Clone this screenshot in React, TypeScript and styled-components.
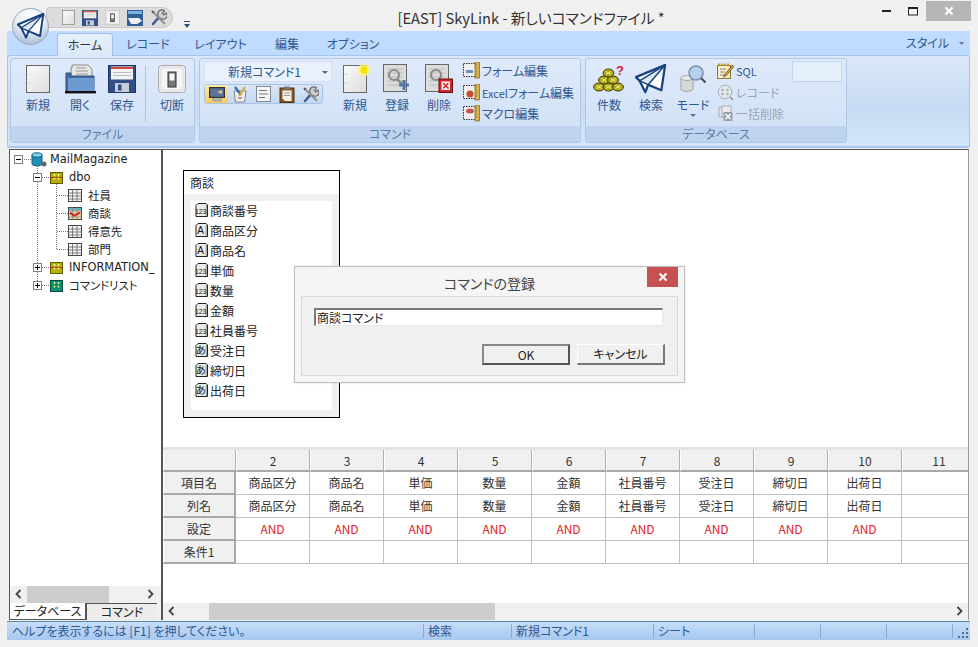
import React from 'react';
import styled, { createGlobalStyle } from 'styled-components';

const FONT = `"Noto Sans CJK JP", "Liberation Sans", sans-serif`;

const Global = createGlobalStyle`
  html, body { margin: 0; padding: 0; background: #f0f0f0; }
  * { box-sizing: border-box; }
  body { font-family: ${FONT}; font-size: 12px; font-feature-settings: "palt" 1; }
`;

const Page = styled.div`
  width: 978px; height: 647px; overflow: hidden; position: relative;
  display: flex; flex-direction: column; background: #f0f0f0; color: #222;
`;
const TitleBar = styled.div`height: 31px; flex: none; position: relative; display: flex; align-items: flex-start;`;
const LogoOrb = styled.div`
  position: absolute; left: 12px; top: 8px; width: 37px; height: 37px; border-radius: 50%; z-index: 3;
  background: radial-gradient(circle at 50% 25%, #ffffff 0%, #e8eef6 45%, #b7c9de 75%, #8ea8c4 100%);
  border: 1px solid #9aa7b5; display: flex; align-items: center; justify-content: center;
`;
const QuickBar = styled.div`
  position: absolute; left: 46px; top: 7px; width: 127px; height: 21px; border-radius: 4px 11px 11px 4px;
  background: #dcdcdc; border: 1px solid #c8c8c8; display: flex; align-items: center; gap: 7px; padding-left: 15px;
`;
const QuickMore = styled.div`position: absolute; left: 184px; top: 14px; width: 6px; height: 7px; color: #34507a;`;
const WindowTitle = styled.div`
  position: absolute; left: 84px; right: 0; top: 8px; text-align: center; font-size: 14.7px; line-height: 20px; color: #333;
`;
const WinButtons = styled.div`position: absolute; right: 7px; top: 1px; display: flex; align-items: flex-start;`;
const WinBtn = styled.div<{ $close?: boolean; $w: number }>`
  width: ${p => p.$w}px; height: 20px; display: flex; align-items: center; justify-content: center;
  background: ${p => (p.$close ? '#b6b6b6' : 'transparent')};
`;

const Ribbon = styled.div`margin: 0 8px 0 7px; background: #bfdbff; flex: none; height: 117px; display: flex; flex-direction: column;`;
const TabStrip = styled.div`height: 24px; flex: none; display: flex; align-items: flex-end; padding-left: 50px; position: relative;`;
const Tab = styled.div<{ $active?: boolean; $w: number }>`
  width: ${p => p.$w}px; height: 22px; text-align: center; line-height: 21px; color: #2f5790; font-size: 12px;
  ${p => p.$active ? `background: linear-gradient(#e6f0fc, #dbe8f9); border: 1px solid #9fc0e8; border-bottom: 0; border-radius: 3px 3px 0 0; margin-bottom: -1px; height: 23px; z-index: 1; position: relative; color: #333;` : ''}
`;
const StyleMenu = styled.div`position: absolute; right: 6px; top: 3px; color: #2f5790; font-size: 12px; display: flex; align-items: center; gap: 10px; line-height: 18px;`;
const RibbonBody = styled.div`
  flex: 1; display: flex; gap: 4px; padding: 2px 3px 3px 2px; border: 1px solid #a5c6ec; border-bottom: 2px solid #a5c6ec;
  background: linear-gradient(#dbe8f9, #c7dbf4 60%, #d4e6fa); border-radius: 3px;
`;
const Group = styled.div<{ $w: number }>`
  width: ${p => p.$w}px; height: 85px; border: 1px solid #afc8e6; border-radius: 3px; display: flex; flex-direction: column;
  background: linear-gradient(#dfeafa, #cfe0f6);
`;
const GroupBody = styled.div<{ $pad: number }>`flex: 1; display: flex; align-items: flex-start; padding-left: ${p => p.$pad}px; min-height: 0;`;
const GroupLabel = styled.div`
  height: 16px; flex: none; background: #bfd5ef; text-align: center; color: #5c7ca6; font-size: 12px; line-height: 15px;
`;
const BigBtn = styled.div`width: 42px; display: flex; flex-direction: column; align-items: center; padding-top: 6px; color: #2f5790; font-size: 12px; position: relative;`;
const BigIcon = styled.div`height: 28px; display: flex; align-items: center; justify-content: center;`;
const BigText = styled.div`line-height: 16px; margin-top: 4px; white-space: nowrap;`;
const Caret = styled.div`position: absolute; top: 55px; left: 18px; width: 0; height: 0; border: 3px solid transparent; border-top-color: #5a6f8c;`;
const RibbonSep = styled.div`width: 1px; height: 56px; background: #a9c3e2; margin: 7px 5px 0 2px;`;
const ComboCol = styled.div`width: 130px; padding-top: 2px; display: flex; flex-direction: column; gap: 2px;`;
const Combo = styled.div`
  width: 128px; height: 21px; background: #e8f1fc; border: 1px solid #cfe0f4; display: flex; align-items: center;
  color: #2f5790; font-size: 12px; padding-left: 23px; position: relative;
`;
const ComboArrow = styled.div`position: absolute; right: 3px; top: 9px; width: 0; height: 0; border: 3px solid transparent; border-top-color: #55677f;`;
const MiniBar = styled.div`
  width: 119px; height: 20px; display: flex; border: 1px solid #a9c3e2; border-radius: 3px; background: linear-gradient(#d9e6f7, #c4d8f1);
`;
const MiniBtn = styled.div<{ $on?: boolean }>`
  flex: 1; display: flex; align-items: center; justify-content: center;
  ${p => (p.$on ? 'background: linear-gradient(#fde9a8, #fbcb62);' : '')}
`;
const Stack = styled.div<{ $ml: number; $w?: number }>`
  margin-left: ${p => p.$ml}px; padding-top: 2px; display: flex; flex-direction: column; gap: 2.5px;
  ${p => (p.$w ? `width: ${p.$w}px;` : '')}
`;
const StackRow = styled.div<{ $off?: boolean }>`
  height: 19px; display: flex; align-items: center; gap: 2px; white-space: nowrap; font-size: 12px;
  color: ${p => (p.$off ? '#9aa6b5' : '#2f5790')};
`;
const SmallLatin = styled.span`font-size: 11px;`;
const GhostField = styled.div`width: 50px; height: 21px; background: #e6f0fc; border: 1px solid #c3d6ee; margin: 2px 0 0 0;`;
const BleedSvg = styled.svg`overflow: visible;`;

const Main = styled.div`
  flex: none; height: 471px; margin: 1px 9px 0 9px; display: flex;
`;
const LeftPane = styled.div`
  width: 154px; display: flex; flex-direction: column; border-left: 1px solid #555; border-right: 2px solid #555; border-top: 1px solid #555; background: #fff;
`;
const Tree = styled.div`flex: 1; position: relative; padding-top: 0; min-height: 0; overflow: hidden;`;
const TreeLines = styled.svg`position: absolute; left: 0; top: 0; pointer-events: none;`;
const TreeRow = styled.div<{ $x: number }>`
  height: 18px; display: flex; align-items: center; padding-left: ${p => p.$x}px; position: relative; white-space: nowrap; color: #222; font-size: 12px;
`;
const Expander = styled.div`
  width: 9px; height: 9px; border: 1px solid #808080; background: #fff; position: relative; margin-right: 8px; flex: none;
  &::before { content: ''; position: absolute; left: 1px; right: 1px; top: 3px; height: 1px; background: #000; }
`;
const ExpanderPlus = styled(Expander)`
  &::after { content: ''; position: absolute; top: 1px; bottom: 1px; left: 3px; width: 1px; background: #000; }
`;
const TreeLabel = styled.span<{ $ml: number }>`margin-left: ${p => p.$ml}px; font-family: "DejaVu Sans", ${FONT}; font-size: 11.4px;`;

const ScrollBar = styled.div`
  height: 17px; flex: none; background: #f0f0f0; display: flex; align-items: center; position: relative;
`;
const Thumb = styled.div<{ $left: number; $w: number }>`
  position: absolute; top: 0; bottom: 0; left: ${p => p.$left}px; width: ${p => p.$w}px; background: #cdcdcd;
`;
const ArrowBox = styled.div<{ $left?: number; $right?: number }>`
  position: absolute; top: 3px; ${p => (p.$left !== undefined ? `left: ${p.$left}px;` : `right: ${p.$right}px;`)} color: #444; line-height: 0;
`;
const PaneTabs = styled.div`height: 17px; flex: none; display: flex; background: #f0f0f0; padding-right: 3px;`;
const PaneTab = styled.div<{ $on?: boolean; $w: number }>`
  width: ${p => p.$w}px; text-align: center; line-height: 16px; font-size: 12px; color: #222;
  ${p => p.$on ? 'background: #ececec; border-top: 1px solid #555; border-left: 2px solid #555;' : 'background: #fff; border-bottom: 1px solid #555;'}
`;

const RightPane = styled.div`flex: 1; min-width: 0; display: flex; flex-direction: column; border-top: 1px solid #555; border-right: 1px solid #999; position: relative; background: #fff;`;
const Canvas = styled.div`height: 300px; flex: none; padding: 20px 0 0 20px; background: #fff; border-bottom: 3px solid #e4e4e4;`;
const TableCard = styled.div`width: 157px; height: 248px; border: 1px solid #000; background: #f0f0f0; display: flex; flex-direction: column;`;
const CardTitle = styled.div`height: 23px; flex: none; background: #fff; padding: 3px 0 0 6px; line-height: 17px; font-size: 12px; color: #222;`;
const CardList = styled.div`flex: 1; margin: 7px; background: #fff;`;
const FieldRow = styled.div`height: 20px; display: flex; align-items: center; padding: 0 0 2px 4px; gap: 2px; font-size: 12px; color: #222;`;

const GridArea = styled.div`flex: 1; min-height: 0; overflow: hidden; background: #fff;`;
const SheetGrid = styled.div`
  display: grid; grid-template-columns: 73px repeat(10, 74px); grid-template-rows: 22px repeat(4, 23px); width: 840px;
`;
const HeadCell = styled.div`
  background: #f0f0f0; border-right: 1px solid #b0b0b0; border-bottom: 2px solid #a8a8a8; border-left: 1px solid #fff;
  display: flex; align-items: center; justify-content: center; font-size: 12px; color: #333;
`;
const RowHead = styled(HeadCell)`border-right: 2px solid #a8a8a8; border-bottom: 2px solid #a8a8a8; font-size: 12px;`;
const DataCell = styled.div<{ $red?: boolean }>`
  border-right: 1px solid #c0c0c0; border-bottom: 1px solid #c0c0c0; display: flex; align-items: center; justify-content: center; padding-bottom: 1px;
  font-size: 12px; color: ${p => (p.$red ? '#e0202c' : '#333')}; background: #fff; white-space: nowrap;
`;

const Dialog = styled.div`
  position: absolute; left: 131px; top: 116px; width: 391px; height: 117px; background: #f5f5f5; border: 1px solid #bdbdbd;
  box-shadow: 0 0 2px rgba(0,0,0,.12); padding: 0 6px 6px 6px; display: flex; flex-direction: column; z-index: 5;
`;
const DialogTitle = styled.div`height: 29px; flex: none; text-align: center; font-size: 14px; line-height: 33px; color: #444;`;
const DialogClose = styled.div`
  position: absolute; right: 6px; top: 0; width: 31px; height: 20px; background: #c75050; display: flex; align-items: center; justify-content: center;
`;
const DialogBody = styled.div`flex: 1; background: #f0f0f0; border: 1px solid #d9d9d9; padding: 11px 12px 0 12px;`;
const NameInput = styled.div`
  width: 349px; height: 18px; background: #fff; border-top: 2px solid #7a7a7a; border-left: 2px solid #7a7a7a;
  border-right: 1px solid #e8e8e8; border-bottom: 1px solid #e8e8e8; font-size: 12px; line-height: 15px; color: #222; padding-left: 1px;
`;
const DialogActions = styled.div`display: flex; justify-content: flex-end; gap: 7px; margin-top: 18px;`;
const DlgBtn = styled.div<{ $def?: boolean }>`
  width: 88px; height: 21px; background: #f0f0f0; text-align: center; font-size: 12px; line-height: 18px; color: #222;
  border: 1px solid; border-color: #fff #777 #777 #fff;
  ${p => (p.$def ? 'border: 2px solid #666; border-color: #888 #555 #555 #888; line-height: 17px;' : 'border-bottom-width: 2px; border-right-width: 2px;')}
`;

const StatusBar = styled.div`
  flex: none; height: 19px; margin: 1px 8px 0 7px; border-top: 1px solid #5c8898; position: relative;
  background: linear-gradient(#c8def9, #b5d1f4 55%, #a8c8f0); display: flex; align-items: stretch; color: #2f5790; font-size: 12px;
`;
const StatusCell = styled.div<{ $w: number }>`
  width: ${p => p.$w}px; flex: none; padding-left: 5px; line-height: 17px; white-space: nowrap;
  position: relative;
  &:not(:first-child)::before { content: ''; position: absolute; left: 0; top: 2px; bottom: 2px; width: 1px; background: #8ea9c9; }
`;
const Grip = styled.svg`position: absolute; right: 1px; bottom: 1px;`;

/* ---------- icons ---------- */
const Plane = ({ s = 34 }: { s?: number }) => (
  <svg width={s} height={s * 0.94} viewBox="0 0 34 32">
    <path d="M1 14 L32 1 L28 28 L14 22 L11 30 L5 18 Z" fill="#fff" stroke="#16427f" strokeWidth="2.4" strokeLinejoin="round" />
    <path d="M5 18 L32 1 L14 22 Z" fill="#dfe7f2" stroke="#16427f" strokeWidth="1.6" strokeLinejoin="round" />
  </svg>
);
const Page16 = ({ w = 24, h = 28, dot = false }: { w?: number; h?: number; dot?: boolean }) => (
  <BleedSvg width={w} height={h} viewBox="0 0 24 28">
    <defs>
      <linearGradient id="pg" x1="0" y1="0" x2="1" y2="1"><stop offset="0" stopColor="#fbfbfb" /><stop offset="1" stopColor="#dcdcdc" /></linearGradient>
    </defs>
    <rect x=".5" y=".5" width="23" height="27" fill="url(#pg)" stroke="#666" />
    <circle cx="3" cy="9" r=".6" fill="#999" /><circle cx="3" cy="18" r=".6" fill="#999" />
    {dot && <g><circle cx="21" cy="5" r="6.5" fill="#fff27a" opacity=".75" /><circle cx="21" cy="5" r="3.5" fill="#f3e400" /></g>}
  </BleedSvg>
);
const Folder = () => (
  <svg width="31" height="30" viewBox="0 0 31 30">
    <path d="M6 4 H7 V1 H23 L27 5 V14 H6Z" fill="#e6e6e6" stroke="#777" strokeWidth=".8" />
    <path d="M11 4 H21 M11 7 H23 M11 10 H23" stroke="#999" />
    <path d="M1 9 H6 V12 H29 V27 H1 Z" fill="#3f6da8" stroke="#334e75" />
    <path d="M3 14 H29 V27 H3Z" fill="#6c9bd1" />
    <rect x="0" y="27" width="31" height="2.4" fill="#111" />
  </svg>
);
const Floppy = ({ s = 28 }: { s?: number }) => (
  <svg width={s} height={s} viewBox="0 0 28 28">
    <rect x=".5" y=".5" width="27" height="27" fill="#2f4f86" stroke="#1f3563" />
    <rect x="3" y="1.5" width="22" height="13" fill="#f4f4f4" />
    <rect x="3" y="2" width="22" height="2" fill="#d44a3a" />
    <path d="M5 7.5H23M5 10.5H23" stroke="#bbb" />
    <rect x="7" y="18" width="14" height="9" fill="#c8ccd4" />
    <rect x="10" y="19.5" width="3.5" height="6" fill="#2f4f86" />
  </svg>
);
const Switch = ({ s = 28 }: { s?: number }) => (
  <svg width={s} height={s} viewBox="0 0 28 28">
    <rect x=".5" y=".5" width="27" height="27" rx="3" fill="#ededed" stroke="#a8a8a8" />
    <rect x="3" y="3" width="22" height="22" rx="2" fill="#f5f5f5" stroke="#ddd" />
    <rect x="10" y="7" width="8" height="15" fill="#777" stroke="#333" />
    <rect x="11.5" y="8.5" width="5" height="7" fill="#f4f4f4" />
  </svg>
);
const Tools = ({ s = 17 }: { s?: number }) => (
  <svg width={s} height={s} viewBox="0 0 17 17" fill="none">
    <path d="M3 15 L10 7" stroke="#3b5f93" strokeWidth="2.6" strokeLinecap="round" />
    <path d="M9 8 A3.4 3.4 0 0 1 14.5 2 L12.4 4.4 L14 6 L16 4 A3.4 3.4 0 0 1 10.5 9" stroke="#666" strokeWidth="1.2" fill="#cfcfcf" />
    <path d="M2 2 L15 15" stroke="#8f8f8f" strokeWidth="2" />
    <path d="M1.5 1.5 L4.5 2.5 L2.5 4.5 Z" fill="#555" />
  </svg>
);
const Monitor = () => (
  <svg width="16" height="15" viewBox="0 0 16 15">
    <rect x=".5" y=".5" width="15" height="10" fill="#4f5f74" stroke="#333" />
    <rect x="2" y="2" width="12" height="7" fill="#5b6fa0" /><path d="M8 5 L13 3 V7 Z" fill="#e8c860" />
    <rect x="4" y="11" width="8" height="3" fill="#b9b9b9" stroke="#777" strokeWidth=".5" />
  </svg>
);
const Pencils = () => (
  <svg width="16" height="17" viewBox="0 0 16 17">
    <path d="M2 5 H14 L12.5 16 H3.5Z" fill="#eee" stroke="#888" />
    <path d="M3 1 L9 9" stroke="#3e6ca8" strokeWidth="2.4" /><path d="M13 1 L7 10" stroke="#d7a93a" strokeWidth="2" />
    <path d="M6 12H10" stroke="#a33" />
  </svg>
);
const Note = () => (
  <svg width="15" height="16" viewBox="0 0 15 16">
    <rect x=".5" y=".5" width="14" height="15" fill="#f5f5f5" stroke="#7f8a99" />
    <path d="M3 4.5H11M3 8H12M3 11.5H9" stroke="#777" />
  </svg>
);
const Clip = () => (
  <svg width="16" height="17" viewBox="0 0 16 17">
    <rect x="1" y="2" width="14" height="14.5" fill="#8a5a22" stroke="#4e3210" />
    <path d="M3.5 4.5H12.5V15H6L3.5 12.5Z" fill="#f3f3ee" />
    <rect x="5" y="0.5" width="6" height="3" fill="#777" />
    <path d="M5 7H11M5 9.5H11" stroke="#999" />
  </svg>
);
const Reg = ({ kind }: { kind: 'add' | 'del' }) => (
  <svg width="28" height="30" viewBox="0 0 28 30">
    <rect x=".5" y=".5" width="23" height="27" fill="#dcdcdc" stroke="#666" />
    <path d="M4 5H20M4 9H20M4 13H20M4 17H20M4 21H20" stroke="#bcbcbc" />
    <circle cx="11" cy="11" r="5" fill="none" stroke="#8d8d8d" strokeWidth="2.2" /><path d="M14 15 L20 21" stroke="#8d8d8d" strokeWidth="2.6" />
    {kind === 'add'
      ? <path d="M21 16V26M16 21H26" stroke="#4f77a8" strokeWidth="3" />
      : <g><rect x="14" y="15" width="13.5" height="13.5" fill="#d8202c" stroke="#611" /><rect x="16.5" y="17.5" width="8.5" height="8.5" fill="#fff" /><path d="M18 19L23.5 24.5M23.5 19L18 24.5" stroke="#d8202c" strokeWidth="1.6" /></g>}
  </svg>
);
const FormIcon = ({ v }: { v: number }) => (
  <svg width="17" height="17" viewBox="0 0 17 17">
    <rect x=".5" y="1.5" width="13" height="13" fill="#efefef" stroke="#333" strokeDasharray="1.5 1" />
    <rect x="12" y="0" width="4.5" height="16" fill="#d8b24a" stroke="#7d6420" strokeWidth=".7" />
    <path d="M12 3H14M12 6H14M12 9H14M12 12H14" stroke="#7d6420" strokeWidth=".7" />
    {v === 0 && <rect x="3" y="8" width="7" height="3" fill="#6f8fb8" />}
    {v === 1 && <circle cx="7" cy="10" r="3.5" fill="#c6492c" />}
    {v === 2 && <ellipse cx="7" cy="6" rx="4" ry="2.5" fill="#c9544c" />}
  </svg>
);
const Coins = () => (
  <BleedSvg width="30" height="28" viewBox="0 0 30 28">
    {[[5, 22], [14.5, 22], [24, 22], [10, 15], [19, 15], [14.5, 8]].map(([x, y], i) => (
      <g key={i}>
        <ellipse cx={x} cy={y} rx="5.4" ry="4" fill="#b0ab18" stroke="#3d3a05" />
        <path d={`M${x - 2.5} ${y - 1.5}L${x + 2.5} ${y + 1.5}M${x + 2.5} ${y - 1.5}L${x - 2.5} ${y + 1.5}`} stroke="#efe98c" />
      </g>
    ))}
    <text x="22" y="10" fill="#d0202c" fontSize="13" fontWeight="700" fontFamily="Liberation Sans">?</text>
  </BleedSvg>
);
const ModeIcon = () => (
  <svg width="27" height="30" viewBox="0 0 27 30">
    <path d="M1 14 V25 C1 28 13 28 13 25 V14Z" fill="#d8d8d8" stroke="#a3a3a3" />
    <ellipse cx="7" cy="14" rx="6" ry="2.4" fill="#eee" stroke="#a3a3a3" />
    <circle cx="16" cy="9" r="7" fill="#b6d2f0" stroke="#7a8ea8" strokeWidth="1.5" />
    <path d="M21 14 L25.5 18.5" stroke="#555" strokeWidth="2.4" />
  </svg>
);
const SqlIcon = () => (
  <svg width="17" height="16" viewBox="0 0 17 16">
    <rect x=".5" y="2.5" width="13" height="13" fill="#f5eec6" stroke="#8a7a30" />
    <path d="M1 1.5H13" stroke="#c99a28" strokeWidth="2" strokeDasharray="2 1" />
    <path d="M3 6H9M3 9H8M3 12H7" stroke="#888" />
    <path d="M15.5 2 L8 11 L6.5 14 L9.5 12.5 L16.5 4Z" fill="#d9a43a" stroke="#5a4416" strokeWidth=".7" />
  </svg>
);
const RecIcon = () => (
  <svg width="17" height="17" viewBox="0 0 17 17">
    <circle cx="8" cy="8" r="6.8" fill="#e3e6ea" stroke="#aab0b8" />
    <circle cx="5.5" cy="6" r="1.2" fill="#a8aeb6" /><circle cx="10.5" cy="6" r="1.2" fill="#a8aeb6" />
    <circle cx="5.5" cy="10" r="1.2" fill="#a8aeb6" /><circle cx="10.5" cy="10" r="1.2" fill="#a8aeb6" />
    <path d="M13 13L16 16" stroke="#8e949c" strokeWidth="1.6" />
  </svg>
);
const BulkIcon = () => (
  <svg width="17" height="17" viewBox="0 0 17 17">
    <rect x="2" y="2" width="9" height="10" fill="#dfe2e6" stroke="#aab0b8" />
    <rect x="5" y="1" width="9" height="11" fill="#e9ebee" stroke="#aab0b8" />
    <rect x="6.5" y="7" width="9" height="9" fill="#9aa0a8" />
    <path d="M8.5 9L13.5 14M13.5 9L8.5 14" stroke="#fff" strokeWidth="1.4" />
  </svg>
);
const DbCyl = () => (
  <svg width="16" height="15" viewBox="0 0 16 15">
    <path d="M1 3V12C1 14.5 11 14.5 11 12V3Z" fill="#1f8fb8" stroke="#0d5e80" />
    <ellipse cx="6" cy="3" rx="5" ry="2.2" fill="#7fd0ea" stroke="#0d5e80" />
    <circle cx="13" cy="12" r="2.5" fill="#666" />
  </svg>
);
const Schema = ({ teal }: { teal?: boolean }) => (
  <svg width="13" height="13" viewBox="0 0 13 13">
    <rect x=".5" y="1.5" width="12" height="11" fill={teal ? '#0f8f78' : '#b8b000'} stroke={teal ? '#054d40' : '#5f5a00'} />
    <path d="M0 6.5H13" stroke={teal ? '#083' : '#a03020'} />
    <path d="M4.5 3V10M8.5 3V10" stroke="#fff6a0" strokeWidth="1.4" strokeDasharray="2 1.5" />
  </svg>
);
const GridIco = ({ hit }: { hit?: boolean }) => (
  <svg width="14" height="13" viewBox="0 0 14 13">
    <rect x=".5" y=".5" width="13" height="12" fill={hit ? '#f5dc8c' : '#f4f4f4'} stroke="#444" />
    {hit && <rect x="1" y="1" width="12" height="2.5" fill="#5fb7c9" />}
    <path d="M.5 4H13.5M.5 7H13.5M.5 10H13.5M4.5 .5V12.5M9 .5V12.5" stroke={hit ? '#888' : '#666'} strokeWidth=".8" />
    {hit && <path d="M2 5.5 L6 9 L12 5.5" fill="none" stroke="#d0202c" strokeWidth="1.8" />}
  </svg>
);
const Badge = ({ t }: { t: '123' | 'A' | 'あ' }) => (
  <svg width="13" height="14" viewBox="0 0 13 14">
    <path d="M3 .5H11L12.5 2V13.5H1V2.5Z" fill="#ececec" stroke="#222" />
    <rect x="10.5" y="2" width="1.5" height="11" fill="#aaa" />
    <text x="5.7" y="10.6" textAnchor="middle" fontSize={t === '123' ? 6.8 : 10} fontFamily={t === 'あ' ? 'Noto Sans CJK JP' : 'Liberation Sans'} fill="#111">{t}</text>
  </svg>
);
const Chevron = ({ dir }: { dir: 'l' | 'r' }) => (
  <svg width="7" height="10" viewBox="0 0 7 10" fill="none">
    <path d={dir === 'l' ? 'M5.5 1 L1.5 5 L5.5 9' : 'M1.5 1 L5.5 5 L1.5 9'} stroke="#444" strokeWidth="1.8" />
  </svg>
);
const Cross = () => (
  <svg width="10" height="10" viewBox="0 0 10 10"><path d="M1.5 1.5L8.5 8.5M8.5 1.5L1.5 8.5" stroke="#fff" strokeWidth="2" /></svg>
);

const columns = [
  ['2', '商品区分', '商品区分'], ['3', '商品名', '商品名'], ['4', '単価', '単価'], ['5', '数量', '数量'],
  ['6', '金額', '金額'], ['7', '社員番号', '社員番号'], ['8', '受注日', '受注日'], ['9', '締切日', '締切日'], ['10', '出荷日', '出荷日'], ['11', '', ''],
];
const fields: [('123' | 'A' | 'あ'), string][] = [
  ['123', '商談番号'], ['A', '商品区分'], ['A', '商品名'], ['123', '単価'], ['123', '数量'], ['123', '金額'],
  ['123', '社員番号'], ['あ', '受注日'], ['あ', '締切日'], ['あ', '出荷日'],
];

export default function App() {
  return (
    <Page>
      <Global />
      <TitleBar>
        <LogoOrb><Plane s={28} /></LogoOrb>
        <QuickBar>
          <Page16 w={13} h={15} />
          <Floppy s={16} />
          <Switch s={15} />
          <svg width="16" height="16" viewBox="0 0 16 16"><rect width="16" height="16" fill="#2f5f96" /><rect x="1" y="1" width="14" height="3" fill="#7fb0e0" /><path d="M1 8H12L15 11L10 14H4Z" fill="#f0f0f0" /></svg>
          <Tools />
        </QuickBar>
        <QuickMore>
          <svg width="6" height="7" viewBox="0 0 6 7"><path d="M0 0H6V1H0ZM0 3H6L3 7Z" fill="#34507a" /></svg>
        </QuickMore>
        <WindowTitle>[EAST] SkyLink - 新しいコマンドファイル *</WindowTitle>
        <WinButtons>
          <WinBtn $w={27}><svg width="9" height="4"><rect y="1" width="9" height="2" fill="#222" /></svg></WinBtn>
          <WinBtn $w={26}><svg width="10" height="9"><rect x=".5" y=".5" width="9" height="7.5" fill="none" stroke="#222" /><rect width="10" height="2" fill="#222" /></svg></WinBtn>
          <WinBtn $w={45} $close><Cross /></WinBtn>
        </WinButtons>
      </TitleBar>

      <Ribbon>
        <TabStrip>
          <Tab $active $w={56}>ホーム</Tab>
          <Tab $w={70}>レコード</Tab>
          <Tab $w={75}>レイアウト</Tab>
          <Tab $w={58}>編集</Tab>
          <Tab $w={74}>オプション</Tab>
          <StyleMenu>スタイル<svg width="5" height="3"><path d="M0 0H5L2.5 3Z" fill="#778" /></svg></StyleMenu>
        </TabStrip>
        <RibbonBody>
          <Group $w={185}>
            <GroupBody $pad={6}>
              <BigBtn><BigIcon><Page16 /></BigIcon><BigText>新規</BigText></BigBtn>
              <BigBtn><BigIcon><Folder /></BigIcon><BigText>開く</BigText></BigBtn>
              <BigBtn><BigIcon><Floppy /></BigIcon><BigText>保存</BigText></BigBtn>
              <RibbonSep />
              <BigBtn><BigIcon><Switch /></BigIcon><BigText>切断</BigText></BigBtn>
            </GroupBody>
            <GroupLabel>ファイル</GroupLabel>
          </Group>
          <Group $w={382}>
            <GroupBody $pad={4}>
              <ComboCol>
                <Combo>新規コマンド1<ComboArrow /></Combo>
                <MiniBar>
                  <MiniBtn $on><Monitor /></MiniBtn>
                  <MiniBtn><Pencils /></MiniBtn>
                  <MiniBtn><Note /></MiniBtn>
                  <MiniBtn><Clip /></MiniBtn>
                  <MiniBtn><Tools /></MiniBtn>
                </MiniBar>
              </ComboCol>
              <BigBtn><BigIcon><Page16 dot /></BigIcon><BigText>新規</BigText></BigBtn>
              <BigBtn><BigIcon><Reg kind="add" /></BigIcon><BigText>登録</BigText></BigBtn>
              <BigBtn><BigIcon><Reg kind="del" /></BigIcon><BigText>削除</BigText></BigBtn>
              <Stack $ml={3}>
                <StackRow><FormIcon v={0} />フォーム編集</StackRow>
                <StackRow><FormIcon v={1} /><span><SmallLatin>Excel</SmallLatin>フォーム編集</span></StackRow>
                <StackRow><FormIcon v={2} />マクロ編集</StackRow>
              </Stack>
            </GroupBody>
            <GroupLabel>コマンド</GroupLabel>
          </Group>
          <Group $w={262}>
            <GroupBody $pad={2}>
              <BigBtn><BigIcon><Coins /></BigIcon><BigText>件数</BigText></BigBtn>
              <BigBtn><BigIcon><Plane s={32} /></BigIcon><BigText>検索</BigText></BigBtn>
              <BigBtn><BigIcon><ModeIcon /></BigIcon><BigText>モード</BigText><Caret /></BigBtn>
              <Stack $ml={3} $w={75}>
                <StackRow><SqlIcon /><SmallLatin>SQL</SmallLatin></StackRow>
                <StackRow $off><RecIcon />レコード</StackRow>
                <StackRow $off><BulkIcon />一括削除</StackRow>
              </Stack>
              <GhostField />
            </GroupBody>
            <GroupLabel>データベース</GroupLabel>
          </Group>
        </RibbonBody>
      </Ribbon>

      <Main>
        <LeftPane>
          <Tree>
            <TreeLines width="150" height="300">
              <g stroke="#777" strokeDasharray="1 1" fill="none" shapeRendering="crispEdges">
                <path d="M13.5 9H21M27.5 14V135M32 27H40M46.5 32V99M47 45H58M47 63H58M47 81H58M47 99H58M32 117H40M32 135H40" />
              </g>
            </TreeLines>
            <TreeRow $x={4}><Expander /><DbCyl /><TreeLabel $ml={3}>MailMagazine</TreeLabel></TreeRow>
            <TreeRow $x={23}><Expander /><Schema /><TreeLabel $ml={6}>dbo</TreeLabel></TreeRow>
            {['社員', '商談', '得意先', '部門'].map((n, i) => (
              <TreeRow key={n} $x={58}><GridIco hit={i === 1} /><TreeLabel $ml={6}>{n}</TreeLabel></TreeRow>
            ))}
            <TreeRow $x={23}><ExpanderPlus /><Schema /><TreeLabel $ml={6}>INFORMATION_</TreeLabel></TreeRow>
            <TreeRow $x={23}><ExpanderPlus /><Schema teal /><TreeLabel $ml={6}>コマンドリスト</TreeLabel></TreeRow>
          </Tree>
          <ScrollBar>
            <ArrowBox $left={5}><Chevron dir="l" /></ArrowBox>
            <Thumb $left={17} $w={82} />
            <ArrowBox $right={7}><Chevron dir="r" /></ArrowBox>
          </ScrollBar>
          <PaneTabs>
            <PaneTab $w={75}>データベース</PaneTab>
            <PaneTab $on $w={72}>コマンド</PaneTab>
          </PaneTabs>
        </LeftPane>
        <RightPane>
          <Canvas>
            <TableCard>
              <CardTitle>商談</CardTitle>
              <CardList>
                {fields.map(([t, n]) => (
                  <FieldRow key={n}><Badge t={t} />{n}</FieldRow>
                ))}
              </CardList>
            </TableCard>
          </Canvas>
          <GridArea>
            <SheetGrid>
              <HeadCell />
              {columns.map(c => <HeadCell key={c[0]}>{c[0]}</HeadCell>)}
              <RowHead>項目名</RowHead>
              {columns.map(c => <DataCell key={c[0]}>{c[1]}</DataCell>)}
              <RowHead>列名</RowHead>
              {columns.map(c => <DataCell key={c[0]}>{c[2]}</DataCell>)}
              <RowHead>設定</RowHead>
              {columns.map(c => <DataCell key={c[0]} $red>{c[1] ? 'AND' : ''}</DataCell>)}
              <RowHead>条件1</RowHead>
              {columns.map(c => <DataCell key={c[0]} />)}
            </SheetGrid>
          </GridArea>
          <ScrollBar>
            <ArrowBox $left={5}><Chevron dir="l" /></ArrowBox>
            <Thumb $left={46} $w={286} />
            <ArrowBox $right={5}><Chevron dir="r" /></ArrowBox>
          </ScrollBar>
          <Dialog>
            <DialogTitle>コマンドの登録</DialogTitle>
            <DialogClose><Cross /></DialogClose>
            <DialogBody>
              <NameInput>商談コマンド</NameInput>
              <DialogActions>
                <DlgBtn $def>OK</DlgBtn>
                <DlgBtn>キャンセル</DlgBtn>
              </DialogActions>
            </DialogBody>
          </Dialog>
        </RightPane>
      </Main>

      <StatusBar>
        <StatusCell $w={416}>ヘルプを表示するには [F1] を押してください。</StatusCell>
        <StatusCell $w={88}>検索</StatusCell>
        <StatusCell $w={142}>新規コマンド1</StatusCell>
        <StatusCell $w={101}>シート</StatusCell>
        <StatusCell $w={66} />
        <StatusCell $w={66} />
        <StatusCell $w={66} />
        <StatusCell $w={18} />
        <Grip width="12" height="12" viewBox="0 0 12 12">
          <g fill="#4e6b92"><rect x="9" y="1" width="2" height="2" /><rect x="5" y="5" width="2" height="2" /><rect x="9" y="5" width="2" height="2" /><rect x="1" y="9" width="2" height="2" /><rect x="5" y="9" width="2" height="2" /><rect x="9" y="9" width="2" height="2" /></g>
        </Grip>
      </StatusBar>
    </Page>
  );
}
